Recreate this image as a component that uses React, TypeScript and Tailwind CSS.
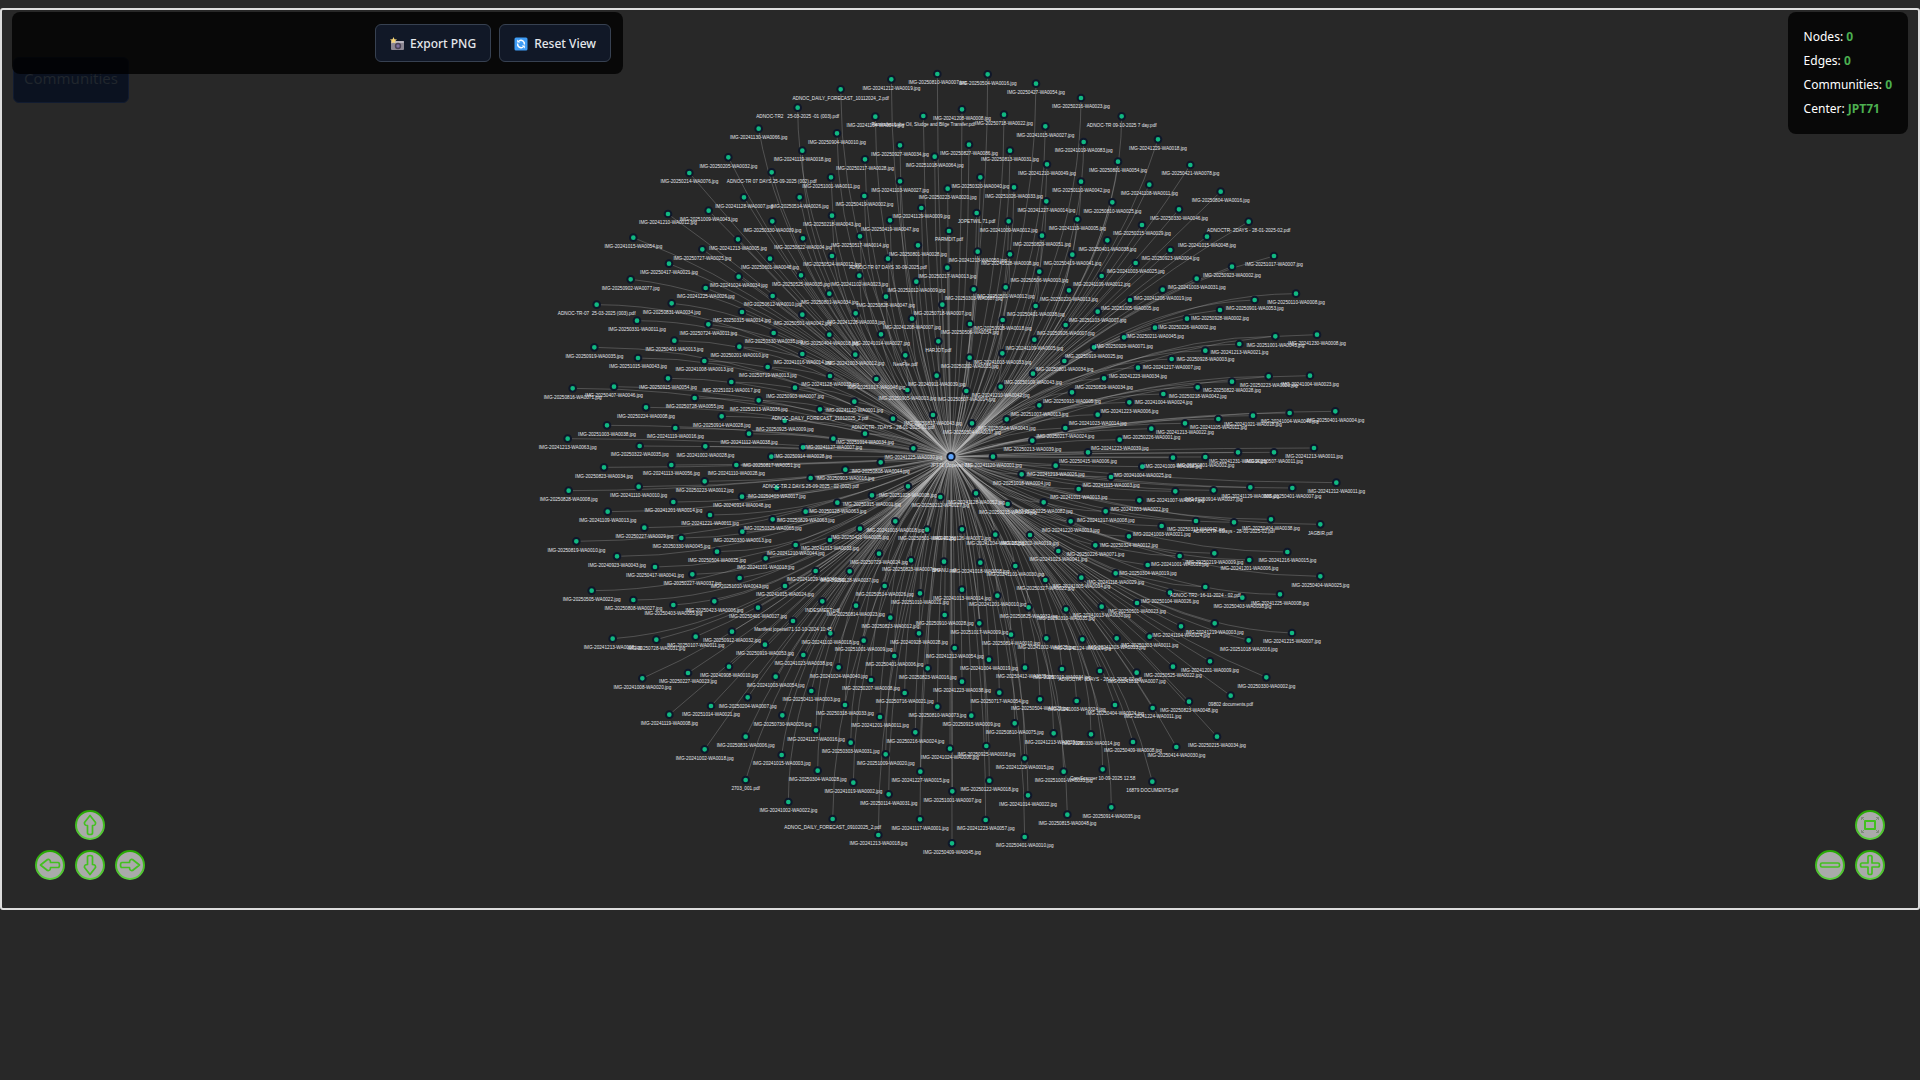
import React from "react";

type Point = { x: number; y: number; label: string };

/* Each row: x, y, label. A label of the form "YYYYMMDD-nnnn" is an image file. */
const topLeft = `
1222 42 20250810-0007
1084 58 20241212-0019
932 88 ADNOC_DAILY_FORECAST_10112024_2.pdf
803 143 ADNOC-TR2   25-03-2025 -01 (003).pdf
1036 170 20241104-0049
1180 168 Reminder: Lube Oil, Sludge and Bilge Transfer.pdf
686 206 20241130-0066
921 220 20250904-0010
1110 256 20250927-0034
1214 290 20251018-0064
817 272 20241119-0018
595 292 20250205-0032
1005 298 20250217-0028
478 339 20250214-0076
725 337 ADNOC-TR 07 DAYS 25-09-2025 (002).pdf
903 352 20251001-0011
1110 364 20241103-0027
1253 386 20250223-0020
642 412 20241128-0007
809 412 20250514-0026
1003 408 20250419-0002
1174 444 20241129-0009
536 452 20251009-0043
414 462 20241210-0012
906 467 20250218-0043
1080 481 20250419-0047
727 484 20250330-0039
1257 513 PARMDIT.pdf
310 533 20241015-0054
624 538 20241213-0005
819 535 20250622-0004
990 529 20250517-0014
1164 556 20250801-0028
517 568 20250727-0025
906 588 20250524-0012
720 596 20250601-0048
1074 596 ADNOC-TR 07 DAYS 30-09-2025.pdf
417 611 20250417-0021
1252 623 20250217-0013
813 646 20250525-0035
988 647 20241102-0023
626 650 20241024-0034
302 658 20250902-0077
1159 665 20251012-0009
527 684 20241225-0026
898 701 20250801-0034
728 708 20250612-0010
1068 710 20250828-0047
200 734 ADNOC-TR-07  25-03-2025 (003).pdf
425 730 20250831-0034
1237 734 20250718-0007
636 756 20250315-0014
817 764 20250501-0042
977 760 20241228-0003
1146 776 20241208-0007
321 782 20250331-0011
`;

const topRight = `
113 43 20250504-0016
258 71 20250427-0054
393 114 20250216-0023
36 148 20241208-0008
162 164 20250718-0022
515 169 ADNOC-TR 09-10-2025 7 day.pdf
286 199 20241015-0027
624 238 20241229-0018
401 246 20241019-0083
57 254 20250827-0086
180 272 20250813-0031
504 305 20250801-0054
291 313 20241210-0049
721 315 20250421-0078
91 352 20250320-0040
393 365 20250110-0042
598 374 20241108-0011
192 382 20251026-0033
812 395 20250804-0016
289 424 20241227-0014
487 427 20250810-0025
687 448 20250330-0046
80 459 JOPETWIL 71.pdf
382 478 20241119-0005
176 484 20241009-0012
896 485 ADNOCTR- 2DAYS - 28-01-2025-02.pdf
576 495 20250215-0029
276 527 20250829-0051
771 530 20241015-0048
472 541 20250401-0038
661 570 20250923-0004
83 575 20241213-0050
180 583 20241028-0008
367 584 20250419-0041
972 588 20251017-0007
557 609 20241003-0025
846 620 20250923-0002
268 635 20250506-0003
455 648 20241109-0012
740 656 20241003-0031
167 682 20250501-0012
71 688 20250303-0087
638 689 20241206-0019
357 691 20250220-0013
1038 701 20250110-0008
540 720 20251005-0005
914 720 20250901-0053
257 738 20250401-0038
810 750 20250928-0002
443 755 20251103-0007
711 776 20250226-0002
158 780 20250928-0018
60 792 20250506-0054
347 795 20250926-0007
`;

const middleLeft = `
535 13 20250724-0011
731 39 20250330-0035
898 44 20250404-0018
1053 43 20241014-0027
433 62 20250401-0013
1225 64 HARJOT.pdf
193 82 20250919-0035
628 80 20250201-0010
817 102 20241016-0014
976 104 20241003-0012
1126 106 NewFile.pdf
324 114 20251015-0043
523 123 20241008-0013
713 141 20250719-0013
1220 167 20240911-0039
900 168 20241128-0039
414 175 20250915-0054
1039 177 20251017-0048
604 186 20251021-0017
252 200 20250407-0046
795 203 20250903-0007
128 205 20250816-0071
1132 210 20250905-0003
494 234 20250728-0055
686 241 20250213-0036
973 245 20241120-0001
348 262 20250224-0008
870 268 ADNOC_DAILY_FORECAST_21012025_2.pdf
1209 285 20250817-0043
575 289 20250914-0028
1089 296 ADNOCTR- 7DAYS - 28-01-2025-01.pdf
764 302 20250925-0009
231 316 20251003-0038
436 324 20241119-0016
657 341 20241112-0038
1005 341 20251014-0034
113 356 20241213-0063
910 356 20241127-0007
329 378 20250322-0035
526 379 20241002-0028
819 382 20250914-0028
1150 385 20241225-0030
724 410 20250817-0051
1052 427 20250808-0044
619 435 20241110-0028
424 435 20241113-0056
222 442 20250823-0034
946 449 20250903-0016
842 474 ADNOC-TR 2 DAYS 25-09-2025 - 02 (002).pdf
524 484 20250223-0012
1134 499 20251028-0008
326 500 20241110-0010
740 503 20250403-0017
116 512 20250828-0008
1026 526 20250315-0001
636 530 20240914-0048
1231 531 20250212-0027
430 546 20241201-0014
922 548 20250128-0063
827 575 20250829-0063
233 575 20241109-0013
540 585 20241221-0011
728 598 20250325-0065
1096 604 20241003-0018
343 623 20250227-0029
990 626 20250421-0005
1191 629 20250501-0041
637 635 20250330-0013
454 654 20250330-0045
900 660 20241013-0033
139 664 20250819-0010
797 675 20241210-0044
561 695 20250504-0025
1047 701 20250729-0024
261 709 20240923-0043
707 715 20241101-0013
1143 721 20250823-0007
1242 725 BHANU.pdf
375 741 20250417-0041
857 753 20241029-0040
959 754 20250128-0037
487 763 20250227-0037
629 774 20251010-0043
`;

const middleRight = `
615 23 20250211-0045
1101 44 20241230-0008
976 49 20251001-0043
522 52 20250929-0071
253 59 20241109-0005
868 72 20241213-0021
432 82 20250919-0025
766 92 20250928-0003
157 100 20241003-0033
59 113 20250202-0035
665 117 20241217-0007
343 123 20250801-0034
564 143 20241223-0034
249 161 20250109-0043
1080 167 20241004-0023
956 169 20250223-0020
462 175 20250829-0034
846 185 20250822-0028
152 200 20241210-0042
743 202 20250218-0042
49 213 20250507-0014
366 217 20250910-0005
640 222 20241004-0024
538 247 20241223-0006
268 256 20251007-0013
1156 274 20250401-0004
1019 279 20241004-0040
443 284 20241023-0014
909 287 20241021-0018
805 297 20241105-0011
170 298 20250804-0043
705 310 20241213-0022
66 310 20250504-0037
346 324 20250217-0024
604 326 20250226-0001
509 359 20241223-0039
247 362 20250213-0039
1092 384 20241213-0011
414 397 20250415-0006
864 397 20241231-0034
972 397 20250507-0011
129 410 20241120-0001
766 411 20250801-0002
669 413 20241009-0058
317 437 20241213-0026
577 440 20241004-0025
215 463 20251018-0004
483 471 20241115-0003
1159 488 20241212-0011
901 502 20241129-0008
1027 504 20250401-0007
386 507 20241011-0013
791 511 20250914-0037
676 514 20241007-0047
78 520 20241128-0052
568 541 20241003-0022
281 547 20250225-0082
173 552 20250215-0039
467 574 20241217-0008
963 598 20250404-0038
738 603 20250313-0042
362 604 20241220-0013
852 607 ADNOCTR- 5Days - 28-01-2025-02.pdf
1111 613 JAGBIR.pdf
635 618 20241003-0021
36 628 20250126-0071
136 644 20241204-0018
240 645 20250202-0019
537 649 20250324-0012
436 676 20250226-0071
325 693 20241023-0041
1012 696 20241216-0015
793 700 20250219-0009
689 708 20241001-0018
898 720 20241201-0006
91 728 20241018-0008
593 735 20250304-0019
196 738 20241101-0030
497 760 20241118-0029
1111 769 20250404-0025
394 773 20241005-0034
286 780 20250327-0022
`;

const bottomLeft = `
765 18 20241015-0024
1064 18 20250514-0026
185 32 20250505-0022
1170 40 20251010-0021
310 60 20250808-0027
553 64 20250423-0006
877 64 INDESMEET.pdf
430 75 20250403-0055
978 77 20250814-0023
684 83 20250401-0027
1244 105 20250910-0028
1081 113 20250823-0012
789 123 Manifest jopetwil71 12-10-2024 10:45
606 155 20250912-0032
901 160 20241102-0018
1167 160 20240928-0028
497 170 20250107-0011
248 176 20241213-0038
379 179 20250728-0031
1001 182 20251001-0009
705 194 20250919-0053
820 225 20241023-0038
1093 228 20250401-0006
597 260 20240908-0010
926 262 20241024-0040
1193 265 20250823-0016
474 279 20250227-0023
737 290 20241003-0054
337 295 20241008-0020
1023 300 20250207-0008
844 333 20250411-0003
1124 339 20250716-0021
653 352 20250204-0007
543 378 20251014-0021
945 375 20250318-0033
1222 380 20250810-0073
418 404 20241119-0008
757 406 20250730-0026
1050 411 20241201-0011
858 451 20241127-0016
1156 457 20250216-0024
647 470 20250831-0006
962 488 20250303-0031
524 508 20241002-0018
1260 506 20241024-0006
755 525 20241015-0003
1067 523 20251009-0020
863 572 20250304-0028
1171 575 20241227-0015
647 600 2703_001.pdf
970 608 20241019-0002
1076 643 20250114-0031
775 666 20241002-0022
908 717 ADNOC_DAILY_FORECAST_09102025_2.pdf
1170 718 20241117-0001
1045 765 20241213-0018
`;

const bottomRight = `
766 21 ADNOC-TR2- 16-11-2024 - 02.pdf
36 29 20241013-0014
660 38 20250104-0026
990 43 20241225-0008
142 47 20241201-0010
877 53 20250403-0038
561 69 20250501-0023
455 80 20241013-0030
236 82 20250825-0032
348 88 20250310-0035
88 130 20251017-0009
794 130 20241219-0003
693 139 20241104-0024
1026 159 20241215-0007
183 164 20250814-0010
599 170 20250303-0011
289 175 20241002-0025
500 175 20241203-0013
397 178 20241124-0029
896 181 20251018-0016
14 204 20241212-0054
117 239 20241004-0019
780 244 20241201-0009
669 260 20250525-0022
225 263 20250412-0039
336 267 20250919-0034
450 273 ADNOCTR- 3DAYS - 28-01-2025-02.pdf
560 278 20241012-0007
949 292 20250330-0002
36 305 20241223-0038
148 338 20250717-0054
842 347 09802 documents.pdf
270 358 20250504-0023
717 365 20250823-0048
380 363 20241003-0024
495 375 20250404-0024
608 384 20241224-0011
64 407 20250915-0009
194 430 20250810-0075
311 460 20241213-0039
423 463 20250330-0014
801 470 20250215-0034
549 486 20250409-0008
109 498 20250925-0018
679 501 20250414-0030
224 535 20241229-0015
458 568 CamScanner 10-09-2025 12.58
341 575 20251001-0033
118 602 20250122-0018
607 605 16879 DOCUMENTS.pdf
7 634 20251001-0007
234 646 20241014-0022
484 682 20250914-0035
352 704 20250815-0048
107 720 20241223-0057
224 771 20250401-0010
6 790 20250409-0045
`;

function parse(rows: string, ox: number, oy: number): Point[] {
  return rows
    .trim()
    .split("\n")
    .map((row) => {
      const [, x, y, name] = row.match(/^(\d+) (\d+) (.*)$/)!;
      const image = name.match(/^(\d{8})-(\d{4})$/);
      return {
        x: ox + Number(x),
        y: oy + Number(y),
        label: image ? `IMG-${image[1]}-WA${image[2]}.jpg` : name,
      };
    });
}

const nodes: Point[] = [
  ...parse(topLeft, 1590, 180),
  ...parse(topRight, 2850, 180),
  ...parse(middleLeft, 1590, 960),
  ...parse(middleRight, 2850, 960),
  ...parse(bottomLeft, 1590, 1740),
  ...parse(bottomRight, 2850, 1740),
];

const center: Point = { x: 2853, y: 1370, label: "JPT71 (Jopetwil 71)" };

/* Quadratic curve whose control point is clamped to the target's axis. */
function edgePath(to: Point): string {
  const dx = to.x - center.x;
  const dy = to.y - center.y;
  const ax = Math.abs(dx);
  const ay = Math.abs(dy);
  const step = Math.max(ax, ay) / 2;
  const vx = center.x + Math.sign(dx) * Math.min(step, ax);
  const vy = center.y + Math.sign(dy) * Math.min(step, ay);
  return `M${center.x} ${center.y}Q${vx} ${vy} ${to.x} ${to.y}`;
}

function Graph() {
  return (
    <svg
      viewBox="6 30 5748 2694"
      className="block h-full w-full"
      role="img"
      aria-label="Communication graph"
    >
      <g fill="none" stroke="#b4b4b4" strokeOpacity="0.3" strokeWidth="3">
        {nodes.map((n, i) => (
          <path key={i} d={edgePath(n)} />
        ))}
      </g>
      <g fill="#10b981" stroke="#0f172a" strokeWidth="6">
        {nodes.map((n, i) => (
          <circle key={i} cx={n.x} cy={n.y} r="10" />
        ))}
        <circle cx={center.x} cy={center.y} r="11" fill="#60a5fa" />
      </g>
      <g
        fill="#e5e7eb"
        fontSize="14"
        textAnchor="middle"
        className="font-['Liberation_Sans',Arial,sans-serif]"
      >
        {nodes.map((n, i) => (
          <text key={i} x={n.x} y={n.y + 31} xmlSpace="preserve">
            {n.label}
          </text>
        ))}
        <text x={center.x} y={center.y + 31}>
          {center.label}
        </text>
      </g>
    </svg>
  );
}

const arrow = "M15 5.5 20.5 12.5Q21 15.5 17.5 15.5V23Q17.5 24.5 15 24.5T12.5 23V15.5Q9 15.5 9.5 12.5Z";

function NavButton({ label, children }: { label: string; children: React.ReactNode }) {
  return (
    <button type="button" aria-label={label} className="block size-[30px] cursor-pointer rounded-full">
      <svg viewBox="0 0 30 30" className="size-full" fill="none">
        <defs>
          <linearGradient id="ring" x1="0" y1="0" x2="0" y2="1">
            <stop offset="0" stopColor="#25a800" />
            <stop offset="1" stopColor="#5fd042" />
          </linearGradient>
        </defs>
        <circle cx="15" cy="15" r="14" fill="#aaaaaa" stroke="url(#ring)" strokeWidth="2" />
        <g stroke="#43c020" strokeWidth="1.7" strokeLinejoin="round">
          {children}
        </g>
      </svg>
    </button>
  );
}

function Stat({ name, value }: { name: string; value: string }) {
  return (
    <div>
      {name}: <span className="font-bold text-[#4caf50]">{value}</span>
    </div>
  );
}

function CameraIcon() {
  return (
    <svg viewBox="0 0 14 14" className="size-3.5" aria-hidden="true">
      <rect x="1" y="4" width="13" height="9" rx="1" fill="#8d8792" />
      <rect x="1" y="4" width="13" height="2" rx="1" fill="#b9b4bd" />
      <circle cx="8" cy="9" r="3.2" fill="#4b4355" />
      <circle cx="8" cy="9" r="1.7" fill="#7d6fa0" />
      <path d="M3.5 0 4.5 2.3 7 2.6 5 4.2 5.4 6.4 3.5 5.2 1.4 6.4 1.9 4.2 0 2.6 2.5 2.3Z" fill="#f6d476" />
    </svg>
  );
}

function RefreshIcon() {
  return (
    <svg viewBox="0 0 14 14" className="size-3.5" aria-hidden="true">
      <rect x="0.5" y="0.5" width="13" height="13" rx="1.5" fill="#3f9cf5" />
      <g fill="none" stroke="#ffffff" strokeWidth="1.5">
        <path d="M10.3 7.5A3.4 3.4 0 0 0 5 4" />
        <path d="M3.7 6.5A3.4 3.4 0 0 0 9 10" />
      </g>
      <path d="M3.2 5.6V2.4L6.4 5.6ZM10.8 8.4V11.6L7.6 8.4Z" fill="#ffffff" />
    </svg>
  );
}

const toolButton =
  "flex h-[38px] cursor-pointer items-center gap-1.5 rounded-md border border-[#374151] bg-[#111827] px-3.5 pt-0.5 text-xs font-medium text-gray-200";

export default function App() {
  return (
    <div className="min-h-screen bg-[#282828] pt-2 font-['Noto_Sans',sans-serif] text-white">
      <main className="relative h-[902px] rounded-[3px] border-2 border-[#dddddd]">
        <Graph />

        <section className="absolute top-[47px] left-[11px] h-[46px] rounded-md border border-[#111b30] bg-[#0b1220] px-2.5 pt-2">
          <h2 className="text-[15px] leading-6 text-[#20262d]">Communities</h2>
        </section>

        <div className="absolute top-0.5 left-2.5 flex w-[611px] justify-end gap-2 rounded-lg bg-black/80 p-3">
          <button type="button" className={toolButton}>
            <CameraIcon />
            <span>Export PNG</span>
          </button>
          <button type="button" className={toolButton}>
            <RefreshIcon />
            <span>Reset View</span>
          </button>
        </div>

        <aside className="absolute top-0.5 right-2.5 space-y-1 rounded-lg bg-black/80 px-4 py-[15px] text-xs leading-5 text-white">
          <Stat name="Nodes" value="0" />
          <Stat name="Edges" value="0" />
          <Stat name="Communities" value="0" />
          <Stat name="Center" value="JPT71" />
        </aside>

        <div className="absolute bottom-7 left-[33px] grid grid-cols-3 gap-2.5">
          <div className="col-start-2">
            <NavButton label="Move up">
              <path d={arrow} />
            </NavButton>
          </div>
          <div className="col-start-1">
            <NavButton label="Move left">
              <path d={arrow} transform="rotate(-90 15 15)" />
            </NavButton>
          </div>
          <NavButton label="Move down">
            <path d={arrow} transform="rotate(180 15 15)" />
          </NavButton>
          <NavButton label="Move right">
            <path d={arrow} transform="rotate(90 15 15)" />
          </NavButton>
        </div>

        <div className="absolute right-[33px] bottom-7 grid grid-cols-2 gap-2.5">
          <div className="col-start-2">
            <NavButton label="Fit to view">
              <rect x="10" y="11" width="10" height="8" strokeWidth="2" />
              <g stroke="#7f8a7c" strokeWidth="1">
                <path d="M9 10 6.5 7.5M6.5 10V7.5H9M21 10 23.5 7.5M21 7.5H23.5V10M9 20 6.5 22.5M6.5 20V22.5H9M21 20 23.5 22.5M21 22.5H23.5V20" />
              </g>
            </NavButton>
          </div>
          <div className="col-start-1">
            <NavButton label="Zoom out">
              <rect x="5.5" y="13" width="19" height="4" rx="1.5" />
            </NavButton>
          </div>
          <NavButton label="Zoom in">
            <path d="M13 7Q13 5.5 15 5.5T17 7V13H23Q24.5 13 24.5 15T23 17H17V23Q17 24.5 15 24.5T13 23V17H7Q5.5 17 5.5 15T7 13H13Z" />
          </NavButton>
        </div>
      </main>
    </div>
  );
}
